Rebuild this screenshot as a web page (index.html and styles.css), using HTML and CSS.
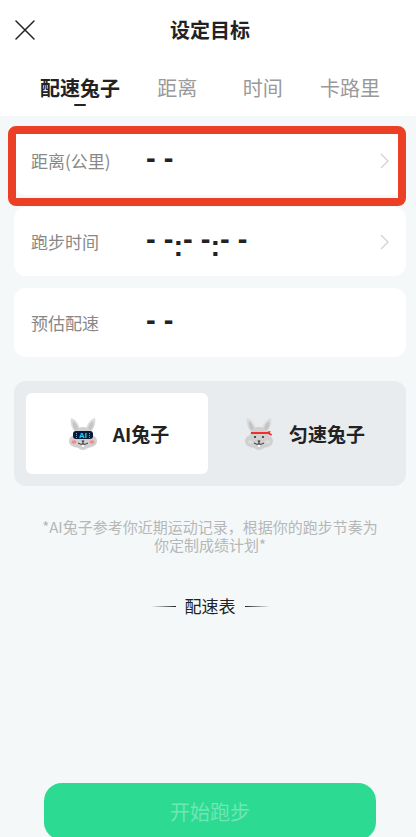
FILE: index.html
```html
<!DOCTYPE html>
<html lang="zh-CN">
<head>
<meta charset="utf-8">
<meta name="viewport" content="width=device-width, initial-scale=1">
<title>设定目标</title>
<link rel="stylesheet" href="styles.css">
</head>
<body>
<div class="page">
  <header class="header">
    <button class="close" type="button" aria-label="关闭">
      <svg width="20" height="20" viewBox="0 0 20 20" aria-hidden="true"><path d="M1 1L19 19M19 1L1 19"/></svg>
    </button>
    <h1 class="title">设定目标</h1>
  </header>
  <nav class="tabs">
    <a class="tab tab-active" href="#pacer">配速兔子</a>
    <a class="tab" href="#distance">距离</a>
    <a class="tab" href="#time">时间</a>
    <a class="tab" href="#calorie">卡路里</a>
  </nav>
  <main class="content">
    <div class="cards">
      <button class="card card-marked" type="button">
        <span class="label">距离(公里)</span>
        <span class="value">- -</span>
        <svg class="chevron" width="10" height="16" viewBox="0 0 10 16" aria-hidden="true"><path d="M1 1L8 8L1 15"/></svg>
      </button>
      <button class="card" type="button">
        <span class="label">跑步时间</span>
        <span class="value">- -<span class="colon">:</span>- -<span class="colon">:</span>- -</span>
        <svg class="chevron" width="10" height="16" viewBox="0 0 10 16" aria-hidden="true"><path d="M1 1L8 8L1 15"/></svg>
      </button>
      <div class="card">
        <span class="label">预估配速</span>
        <span class="value">- -</span>
      </div>
    </div>

    <div class="modes">
      <button class="mode mode-active" type="button">
        <svg class="rabbit" width="28" height="34" viewBox="0 0 28 34" aria-hidden="true">
          <path class="fur-light" d="M2 1C6 2 10 6 11 13L5 14C2 10 1 5 2 1ZM26 1C22 2 18 6 17 13L23 14C26 10 27 5 26 1Z"/>
          <path class="fur-dark" d="M4 4C7 6 9 9 9 13L6 13C4 10 3 7 4 4ZM24 4C21 6 19 9 19 13L22 13C24 10 25 7 24 4Z"/>
          <path class="fur" d="M14 10C8 10 5 14 5 18C2 19 0 21 0 24C0 29 5 30 9 31C11 32 12 33 14 33C16 33 17 32 19 31C23 30 28 29 28 24C28 21 26 19 23 18C23 14 20 10 14 10Z"/>
          <ellipse class="blush" cx="5" cy="25" rx="2.5" ry="1.7"/>
          <ellipse class="blush" cx="23" cy="25" rx="2.5" ry="1.7"/>
          <rect class="visor" x="4" y="14" width="20" height="8" rx="3"/>
          <path class="visor-dots" d="M7.5 16V21M20.5 16V21"/>
          <text class="visor-text" x="14" y="21" text-anchor="middle">AI</text>
          <path class="mouth" d="M14 24V27M9 26Q12 28 14 27Q16 28 19 26"/>
          <path class="nose" d="M12.5 23.5H15.5L14 25.5Z"/>
          <path class="tooth" d="M13 28H15V30H13Z"/>
        </svg>
        <span>AI兔子</span>
      </button>
      <button class="mode" type="button">
        <svg class="rabbit" width="28" height="34" viewBox="0 0 28 34" aria-hidden="true">
          <path class="fur-light" d="M2 1C6 2 10 6 11 13L5 14C2 10 1 5 2 1ZM26 1C22 2 18 6 17 13L23 14C26 10 27 5 26 1Z"/>
          <path class="fur-dark" d="M4 4C7 6 9 9 9 13L6 13C4 10 3 7 4 4ZM24 4C21 6 19 9 19 13L22 13C24 10 25 7 24 4Z"/>
          <path class="fur" d="M14 10C8 10 5 14 5 18C2 19 0 21 0 24C0 29 5 30 9 31C11 32 12 33 14 33C16 33 17 32 19 31C23 30 28 29 28 24C28 21 26 19 23 18C23 14 20 10 14 10Z"/>
          <ellipse class="fur-light" cx="5.5" cy="25" rx="2.5" ry="1.7"/>
          <ellipse class="fur-light" cx="22.5" cy="25" rx="2.5" ry="1.7"/>
          <path class="band" d="M6 16H24"/>
          <path class="band-knot" d="M22.5 14.5L25.5 14L25 16.2L27 17L26.5 18.8L23.5 17.6Z"/>
          <circle class="nose" cx="10" cy="20" r="1.1"/>
          <circle class="nose" cx="18" cy="20" r="1.1"/>
          <path class="mouth" d="M14 24V27M9 26Q12 28 14 27Q16 28 19 26"/>
          <path class="nose" d="M12.5 23.5H15.5L14 25.5Z"/>
          <path class="tooth" d="M13 28H15V30H13Z"/>
        </svg>
        <span>匀速兔子</span>
      </button>
    </div>

    <p class="note">*AI兔子参考你近期运动记录，根据你的跑步节奏为你定制成绩计划*</p>
    <h2 class="section">配速表</h2>
    <button class="start" type="button">开始跑步</button>
  </main>
</div>
</body>
</html>
```

FILE: styles.css
```css
* {
  box-sizing: border-box;
}

html {
  scrollbar-width: none;
}

body {
  margin: 0;
  background: #f4f8f9;
  color: #222;
  font-family: "Noto Sans CJK SC", sans-serif;
}

button {
  border: 0;
  padding: 0;
  background: none;
  color: inherit;
  font: inherit;
}

svg {
  display: block;
  flex: none;
}

.page {
  display: flex;
  flex-direction: column;
  min-height: calc(100vh + 3px);
}

.header {
  display: grid;
  grid-template-columns: 20px 1fr 20px;
  align-items: center;
  height: 60px;
  padding: 0 11px 0 15px;
  background: #fff;
}

.close path {
  fill: none;
  stroke: #222;
  stroke-width: 1.5;
  stroke-linecap: round;
}

.title {
  margin: 0;
  font-size: 20px;
  line-height: 28px;
  text-align: center;
}

.tabs {
  display: grid;
  grid-template-columns: 80px 1fr 1fr 60px;
  gap: 29px;
  height: 56px;
  padding: 14px 36px 0 40px;
  background: #fff;
}

.tab {
  display: flex;
  flex-direction: column;
  align-items: center;
  color: #999;
  font-size: 20px;
  line-height: 28px;
  text-decoration: none;
}

.tab-active {
  color: #222;
  font-weight: 700;
}

.tab-active::after {
  content: "";
  width: 12px;
  height: 2px;
  margin-top: 2px;
  border-radius: 1px;
  background: #222;
}

.content {
  display: flex;
  flex: 1;
  flex-direction: column;
  padding: 10px 10px 0 14px;
}

.cards {
  display: flex;
  flex-direction: column;
  gap: 12px;
}

.card {
  position: relative;
  display: flex;
  align-items: center;
  height: 69px;
  padding: 0 16px 0 17px;
  border-radius: 12px;
  background: #fff;
  text-align: left;
}

.card-marked::after {
  content: "";
  position: absolute;
  inset: 0 0 -11px -6px;
  border: 8px solid #ec4026;
  border-radius: 8px;
}

.label {
  width: 115px;
  color: #888;
  font-size: 17px;
  line-height: 24px;
}

.value {
  flex: 1;
  padding-bottom: 5px;
  font: 700 29px/36px "Liberation Sans", sans-serif;
}

.colon {
  line-height: 0;
  vertical-align: sub;
}

.chevron path {
  fill: none;
  stroke: #d2d2d2;
  stroke-width: 1.3;
}

.modes {
  display: grid;
  grid-template-columns: 1fr 1fr;
  gap: 4px;
  margin-top: 24px;
  padding: 12px;
  border-radius: 12px;
  background: #e8ecef;
}

.mode {
  display: flex;
  align-items: center;
  justify-content: center;
  gap: 16px;
  height: 81px;
  padding-left: 4px;
  border-radius: 6px;
  font-size: 19px;
  font-weight: 700;
}

.mode-active {
  background: #fff;
}

.fur {
  fill: #d0d0d0;
}

.fur-light {
  fill: #dcdcdc;
}

.fur-dark {
  fill: #c4c4c4;
}

.blush {
  fill: #ff8585;
}

.visor {
  fill: #071b3c;
}

.visor-dots {
  stroke: #8795ad;
  stroke-width: 1;
  stroke-dasharray: 1 1;
}

.visor-text {
  fill: #28d3f5;
  font: 700 8px "Liberation Sans", sans-serif;
}

.mouth {
  fill: none;
  stroke: #333;
  stroke-width: 1;
}

.nose {
  fill: #333;
}

.tooth {
  fill: #fff;
}

.band {
  stroke: #f22e2e;
  stroke-width: 2;
}

.band-knot {
  fill: #f22e2e;
}

.note {
  margin: 32px 24px 0;
  color: #b5b7b8;
  font-size: 15px;
  line-height: 18px;
  text-align: center;
}

.section {
  display: flex;
  align-items: center;
  justify-content: center;
  gap: 9px;
  margin: 40px 0 24px;
  font-size: 17px;
  font-weight: 400;
  line-height: 24px;
}

.section::before,
.section::after {
  content: "";
  width: 25px;
  height: 1px;
  background: linear-gradient(to right, transparent, #222);
}

.section::after {
  background: linear-gradient(to left, transparent, #222);
}

.start {
  height: 57px;
  margin: auto 30px 0;
  border-radius: 18px;
  background: #2cda92;
  color: #70e6b5;
  font-size: 20px;
}
```
